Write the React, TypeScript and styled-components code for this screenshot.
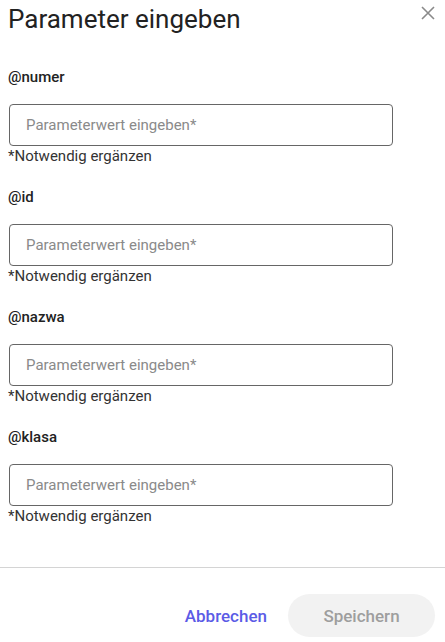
import styled, { createGlobalStyle } from "styled-components";

const GlobalStyle = createGlobalStyle`
  body {
    margin: 0;
    background: #ffffff;
    font-family: Roboto, "Liberation Sans", sans-serif;
  }
`;

const params = ["@numer", "@id", "@nazwa", "@klasa"];

export default function App() {
  return (
    <>
      <GlobalStyle />
      <SDialog>
        <SHeader>
          <STitle>Parameter eingeben</STitle>
          <SClose aria-label="close">
            <svg width="14" height="14" viewBox="0 0 14 14">
              <path d="M1 1L13 13M13 1L1 13" stroke="#8a8a8a" strokeWidth="1.6" />
            </svg>
          </SClose>
        </SHeader>
        <SBody>
          {params.map((p) => (
            <SField key={p}>
              <SLabel>{p}</SLabel>
              <SInput placeholder="Parameterwert eingeben*" />
              <SHint>*Notwendig ergänzen</SHint>
            </SField>
          ))}
        </SBody>
        <SFooter>
          <SCancel>Abbrechen</SCancel>
          <SSave disabled>Speichern</SSave>
        </SFooter>
      </SDialog>
    </>
  );
}

const SDialog = styled.div`
  display: flex;
  flex-direction: column;
  width: 445px;
  height: 642px;
  background: #ffffff;
`;

const SHeader = styled.div`
  display: flex;
  justify-content: space-between;
  align-items: flex-start;
  padding: 3px 10px 0 8px;
`;

const STitle = styled.h1`
  margin: 0;
  font-size: 26px;
  line-height: 32px;
  font-weight: 400;
  color: #222222;
`;

const SClose = styled.button`
  border: none;
  background: none;
  padding: 0;
  margin-top: 3px;
  width: 14px;
  height: 14px;
  display: flex;
  cursor: pointer;
`;

const SBody = styled.div`
  display: flex;
  flex-direction: column;
  gap: 21px;
  padding: 32px 0 0 9px;
  flex: 1;
`;

const SField = styled.div`
  display: flex;
  flex-direction: column;
`;

const SLabel = styled.div`
  font-size: 15px;
  line-height: 20px;
  font-weight: 500;
  color: #222222;
  margin-left: -1px;
  margin-bottom: 17px;
`;

const SInput = styled.input`
  box-sizing: border-box;
  width: 384px;
  height: 42px;
  border: 1px solid #666666;
  border-radius: 4px;
  padding: 0 16px;
  font-family: Roboto, "Liberation Sans", sans-serif;
  font-size: 15px;
  color: #222222;
  outline: none;
  &::placeholder {
    color: #8a8a8a;
  }
`;

const SHint = styled.div`
  font-size: 15px;
  line-height: 20px;
  color: #333333;
  margin-left: -1px;
`;

const SFooter = styled.div`
  display: flex;
  justify-content: flex-end;
  align-items: center;
  gap: 21px;
  border-top: 1px solid #d4d4d4;
  padding: 26px 10px 5px 0;
`;

const SCancel = styled.button`
  border: none;
  background: none;
  padding: 0;
  font-family: Roboto, "Liberation Sans", sans-serif;
  font-size: 17px;
  font-weight: 500;
  color: #5b5be6;
  cursor: pointer;
`;

const SSave = styled.button`
  width: 147px;
  height: 43px;
  border: none;
  border-radius: 22px;
  background: #f2f2f2;
  font-family: Roboto, "Liberation Sans", sans-serif;
  font-size: 17px;
  font-weight: 500;
  color: #9e9e9e;
`;
